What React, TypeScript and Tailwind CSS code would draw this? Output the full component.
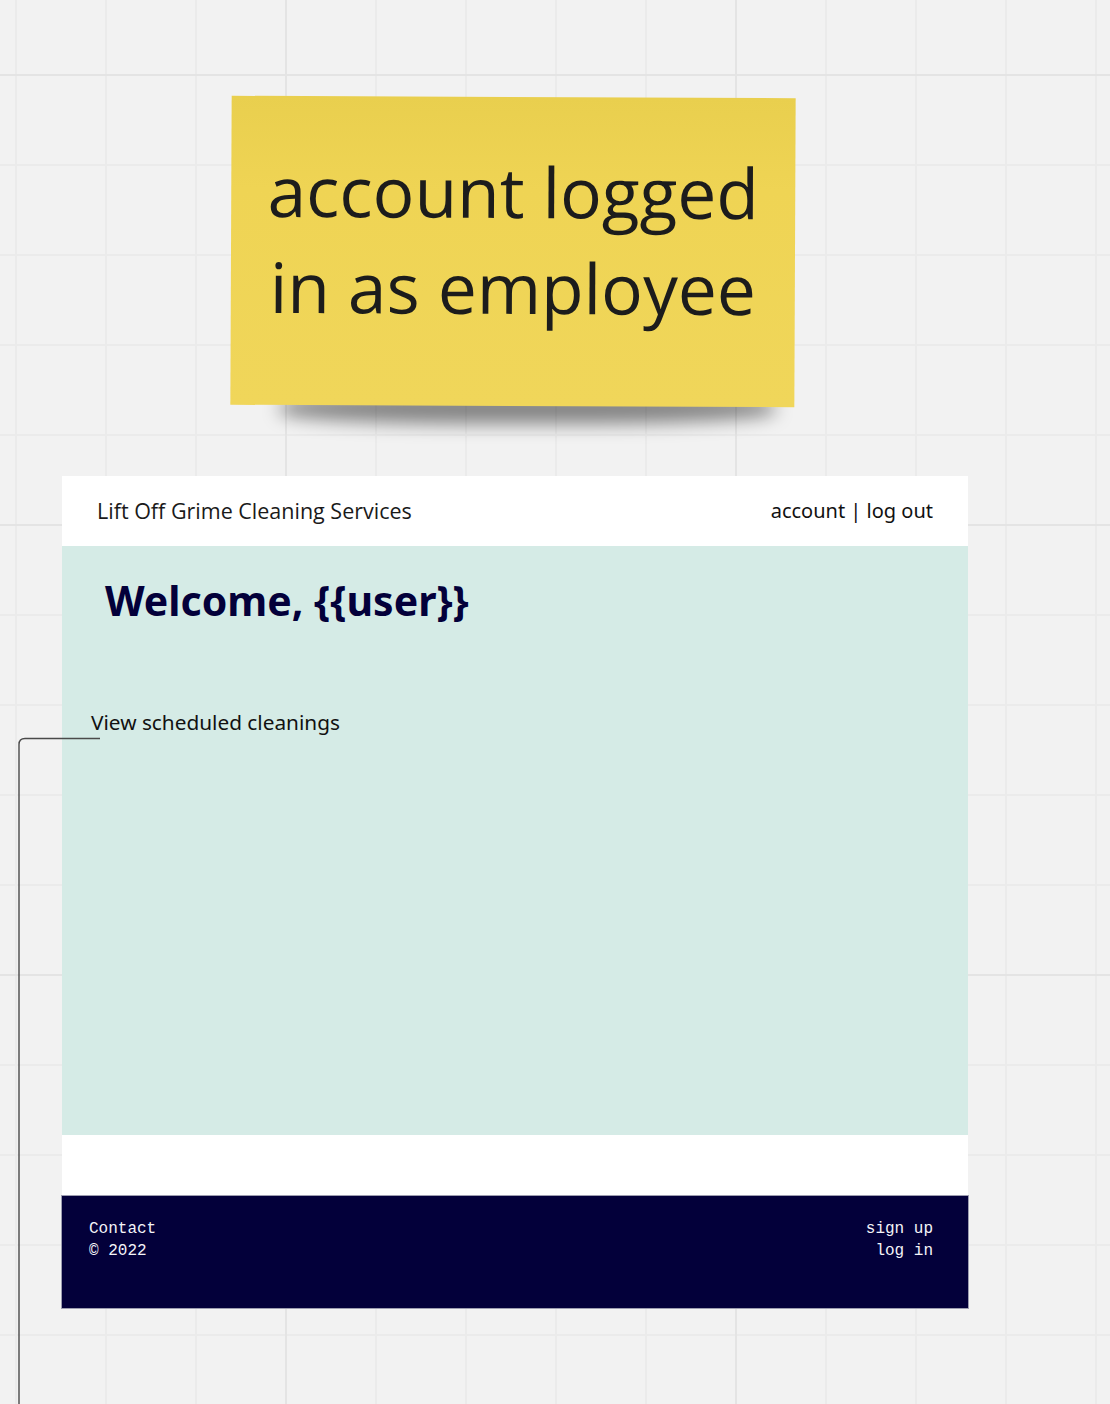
import React from "react";

export default function App() {
  return (
    <div className="relative w-[1110px] h-[1404px] overflow-hidden bg-[#f2f2f2] bg-[linear-gradient(to_right,#e4e4e4_2px,transparent_2px),linear-gradient(to_bottom,#e4e4e4_2px,transparent_2px),linear-gradient(to_right,#ebebeb_2px,transparent_2px),linear-gradient(to_bottom,#ebebeb_2px,transparent_2px)] bg-[size:450px_450px,450px_450px,90px_90px,90px_90px] bg-[position:285px_74px,285px_74px,15px_74px,15px_74px]">
      {/* sticky note shadow */}
      <div className="absolute left-[280px] top-[392px] w-[495px] h-[32px] rounded-[40%] bg-black/45 blur-[9px]" />
      {/* sticky note */}
      <div className="absolute left-[231px] top-[97px] w-[564px] h-[309px] rotate-[0.25deg] bg-[linear-gradient(to_bottom,#e9cf4e,#efd454_30%,#f0d65a)] flex flex-col items-center pt-[46px]">
        <div className="font-['Open_Sans',sans-serif] text-[69.5px] leading-[96px] text-[#1c1c1c] text-center">
          <div>account logged</div>
          <div>in as employee</div>
        </div>
      </div>

      {/* page frame */}
      <div className="absolute left-[62px] top-[476px] w-[906px] flex flex-col">
        <div className="h-[70px] bg-white flex items-center justify-between pl-[35px] pr-[35px]">
          <span className="font-['Open_Sans',sans-serif] text-[21.5px] text-[#1a1a1a]">Lift Off Grime Cleaning Services</span>
          <span className="font-['Noto_Sans',sans-serif] text-[20px] text-[#111]">account | log out</span>
        </div>
        <div className="h-[589px] bg-[#d5ebe6] flex flex-col">
          <div className="pl-[43px] pt-[26px] font-['Noto_Sans',sans-serif] font-bold text-[41px] leading-[56px] text-[#03003a]">Welcome, {"{{user}}"}</div>
          <div className="pl-[29px] pt-[80px] font-['Noto_Sans',sans-serif] text-[20.8px] leading-[28px] text-[#111]">View scheduled cleanings</div>
        </div>
        <div className="h-[61px] bg-white" />
        <div className="h-[112px] bg-[#03003a] outline outline-1 outline-[#9d9db0] flex justify-between pl-[27px] pr-[35px] pt-[22px] font-['Liberation_Mono',monospace] text-[16px] leading-[22px] text-[#f4f4f8]">
          <div className="flex flex-col">
            <span>Contact</span>
            <span>© 2022</span>
          </div>
          <div className="flex flex-col items-end">
            <span>sign up</span>
            <span>log in</span>
          </div>
        </div>
      </div>

      {/* connector line */}
      <svg className="absolute left-0 top-0 pointer-events-none" width="1110" height="1404" viewBox="0 0 1110 1404">
        <path d="M100 738.5 H25 Q19 738.5 19 744.5 V1404" fill="none" stroke="#4a4a4a" strokeWidth="1.4" />
      </svg>
    </div>
  );
}
